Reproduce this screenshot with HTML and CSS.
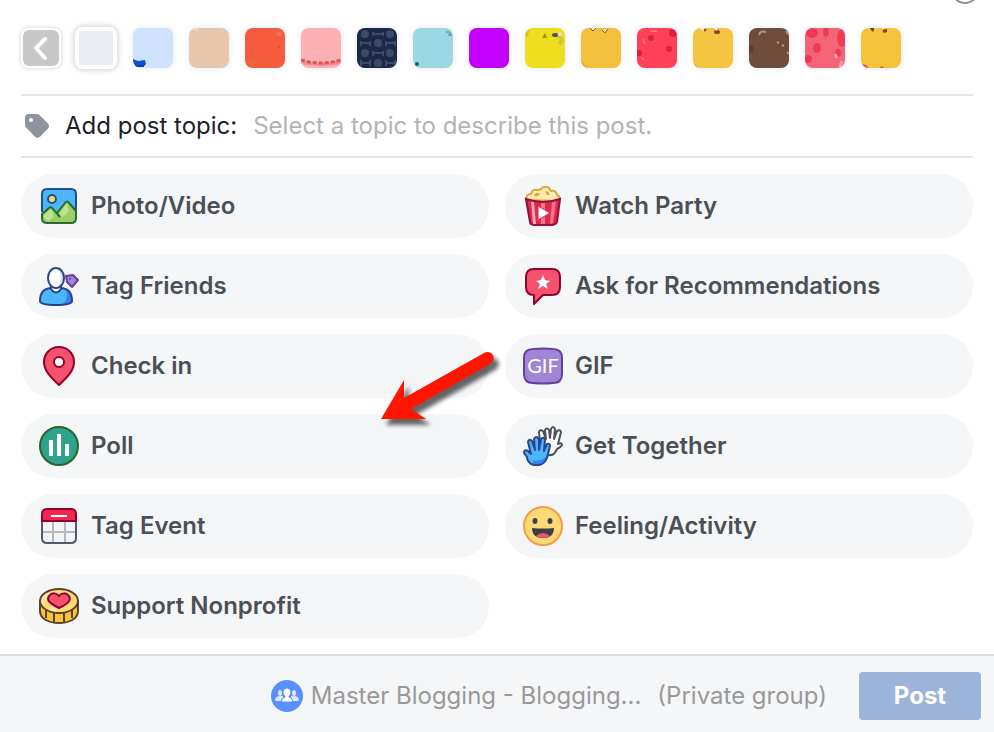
FILE: index.html
```html
<!DOCTYPE html>
<html lang="en">
<head>
    <meta charset="UTF-8">
    <meta name="viewport" content="width=device-width, initial-scale=1.0">
    <title>Create Post</title>
    <link rel="stylesheet" href="styles.css">
</head>
<body>

    <form class="composer">
        <button type="button" class="emoji-btn" aria-label="Insert an emoji"></button>

        <!-- Background picker -->
        <div class="backgrounds">
            <button type="button" class="swatch-back" aria-label="Hide backgrounds">
                <svg viewBox="0 0 36 36"><path d="M22 9 L13 18 L22 28" fill="none" stroke="#fff" stroke-width="4" stroke-linecap="round" stroke-linejoin="round"/></svg>
            </button>
            <div class="swatches">
                <button type="button" class="swatch swatch-none" aria-label="No background"></button>
                <button type="button" class="swatch" aria-label="Light blue">
                    <svg viewBox="0 0 40 40"><rect width="40" height="40" fill="#cfe2fd"/><path d="M0 31 L5 33 L12 32 L13 36 L10 39 L0 38Z" fill="#0a50d8"/><path d="M2 37h9v2h-9z" fill="#0b3f9b"/></svg>
                </button>
                <button type="button" class="swatch" aria-label="Tan">
                    <svg viewBox="0 0 40 40"><rect width="40" height="40" fill="#e8c6ab"/><path d="M4 1 L9 0 L8 3Z" fill="#f7dfd0"/></svg>
                </button>
                <button type="button" class="swatch" aria-label="Orange">
                    <svg viewBox="0 0 40 40"><rect width="40" height="40" fill="#f45c3d"/><path d="M30 5 L37 3 L36 9 L32 7Z" fill="#f8715a"/><path d="M1 34 L7 30 L11 33 L8 39 L0 40Z" fill="#e9643f"/><circle cx="34" cy="19" r="1" fill="#c9502f"/><circle cx="7" cy="23" r="1" fill="#e5553a"/></svg>
                </button>
                <button type="button" class="swatch" aria-label="Pink">
                    <svg viewBox="0 0 40 40"><rect width="40" height="40" fill="#fdb0b4"/><path d="M10 24h18" stroke="#fcb5ab" stroke-width="3"/><path d="M0 32 Q20 38 40 32 V36 Q20 40 0 36Z" fill="#f0908c"/><path d="M0 32 Q20 38 40 32" fill="none" stroke="#d95358" stroke-width="3" stroke-dasharray="4 2"/></svg>
                </button>
                <button type="button" class="swatch" aria-label="Navy pattern">
                    <svg viewBox="0 0 40 40"><rect width="40" height="40" fill="#1c2848"/><g fill="#3d4a67"><circle cx="8" cy="6" r="4"/><circle cx="33" cy="6" r="4"/><circle cx="21" cy="15" r="4"/><circle cx="8" cy="25" r="4"/><circle cx="33" cy="25" r="4"/><circle cx="21" cy="35" r="4"/></g><g fill="none" stroke="#3d4a67" stroke-width="2"><path d="M16 4v4M17 6h8M26 4v4M4 13v5M5 15h8M13 13v5M29 13v5M30 15h8M38 13v5M16 23v5M17 25h8M26 23v5M4 32v6M5 35h8M13 32v6M29 32v6M30 35h8M38 32v6"/></g></svg>
                </button>
                <button type="button" class="swatch" aria-label="Aqua">
                    <svg viewBox="0 0 40 40"><rect width="40" height="40" fill="#9cd7e6"/><path d="M33 4h3M35 7h4M37 4v3" stroke="#4e7f9c" stroke-width="1"/><circle cx="4" cy="36" r="2" fill="#285c78"/></svg>
                </button>
                <button type="button" class="swatch" aria-label="Purple">
                    <svg viewBox="0 0 40 40"><rect width="40" height="40" fill="#c300ff"/></svg>
                </button>
                <button type="button" class="swatch" aria-label="Yellow green">
                    <svg viewBox="0 0 40 40"><rect width="40" height="40" fill="#eddf1e"/><path d="M17 10 L20 5 L22 10Z" fill="#99951d"/><path d="M27 6 L34 4 L39 12 L36 18 L33 15 L35 11Z" fill="#cfc83a"/><ellipse cx="30" cy="7" rx="3" ry="2" fill="#56516b"/><circle cx="35" cy="6" r="2" fill="#f3e9a5"/><path d="M0 6 L5 1 L2 9Z" fill="#c8c029"/></svg>
                </button>
                <button type="button" class="swatch" aria-label="Amber">
                    <svg viewBox="0 0 40 40"><rect width="40" height="40" fill="#f3c03c"/><path d="M9 0 L12 3 L15 0M21 2 L24 5 L27 1" fill="#fff0b8" stroke="#8c5720" stroke-width="1"/><path d="M0 32 L7 40 H0Z" fill="#e1ad35"/></svg>
                </button>
                <button type="button" class="swatch" aria-label="Red">
                    <svg viewBox="0 0 40 40"><rect width="40" height="40" fill="#ff4058"/><g fill="#d9213f"><circle cx="14" cy="10" r="3"/><circle cx="36" cy="5" r="4"/><circle cx="32" cy="21" r="3"/><circle cx="2" cy="25" r="3"/></g><path d="M13 3h7M6 11l2 5M4 29l3 3" stroke="#f8706f" stroke-width="2"/></svg>
                </button>
                <button type="button" class="swatch" aria-label="Gold">
                    <svg viewBox="0 0 40 40"><rect width="40" height="40" fill="#f3c440"/><path d="M7 0 L11 4 L14 0Z" fill="#fff1bb"/><path d="M11 3l2-2" stroke="#6d502e" stroke-width="2"/><ellipse cx="24" cy="4" rx="3" ry="2" fill="#715034"/><path d="M21 0h3v3z" fill="#fff"/><path d="M0 35 L6 40 H0Z" fill="#8b9b35"/></svg>
                </button>
                <button type="button" class="swatch" aria-label="Brown">
                    <svg viewBox="0 0 40 40"><rect width="40" height="40" fill="#704d3a"/><path d="M10 7 Q11 2 17 4M28 14l2 1M33 17l2 1M37 3l3 4M38 24l2 2" fill="none" stroke="#b09481" stroke-width="2"/><ellipse cx="2" cy="21" rx="3" ry="4" fill="#5c4231"/></svg>
                </button>
                <button type="button" class="swatch" aria-label="Coral">
                    <svg viewBox="0 0 40 40"><rect width="40" height="40" fill="#f46478"/><g fill="#f03a55"><ellipse cx="7" cy="5" rx="6" ry="5"/><ellipse cx="21" cy="4" rx="3" ry="5"/><ellipse cx="37" cy="10" rx="5" ry="9"/><ellipse cx="12" cy="20" rx="4" ry="5"/><ellipse cx="3" cy="31" rx="4" ry="4"/><ellipse cx="33" cy="25" rx="3" ry="4"/></g><path d="M30 26l2 4M37 33l-2 6" stroke="#fba0a9" stroke-width="3"/></svg>
                </button>
                <button type="button" class="swatch" aria-label="Golden yellow">
                    <svg viewBox="0 0 40 40"><rect width="40" height="40" fill="#f3c33b"/><path d="M9 0h5l-2 4-2-2zM21 2l5-1v3l-3 1z" fill="#8a3b1d"/><path d="M13 1h2M21 1h2" stroke="#fff0ce" stroke-width="1"/><path d="M1 36l4 1 3 3H2zM18 40l3-2 2 2z" fill="#e15a35"/></svg>
                </button>
            </div>
        </div>

        <!-- Post topic -->
        <div class="topic">
            <svg class="topic-icon" viewBox="0 0 24 24"><path fill="#8d949e" fill-rule="evenodd" d="M4 0 H12 Q13.500 0 14.500 1 L23 9.500 Q25 12 23 14.500 L15 22.800 Q12.500 25 10 22.800 L1 13.500 Q0 12.500 0 11 V4 Q0 0 4 0Z M6 4 A2 2 0 1 0 6 8 A2 2 0 1 0 6 4Z"/></svg>
            <label for="topic">Add post topic:</label>
            <input type="text" id="topic" placeholder="Select a topic to describe this post.">
        </div>

        <!-- Add to post -->
        <div class="actions">
            <button type="button" class="action">
                <svg class="action-icon" viewBox="0 0 40 40">
                    <rect x="3" y="3" width="34" height="34" rx="5" fill="#4db5fa"/>
                    <circle cx="13" cy="13" r="4" fill="#ffd36e" stroke="#1d5290" stroke-width="2"/>
                    <path d="M3 28 L10 22 Q12 20 14 22 L18 27 L26 17 Q28 14 30 17 L37 25 V32 Q37 37 32 37 H8 Q3 37 3 32Z" fill="#9bcf64"/>
                    <path d="M5 29 L12 23 L15 30 L10 35 Q4 34 5 29Z M20 28 L28 17 L30 25 L24 31Z" fill="#bfe095"/>
                    <path d="M3 26 V8 Q3 3 8 3 H32 Q37 3 37 8 V24" fill="none" stroke="#1d5290" stroke-width="2"/>
                    <path d="M21 31 L14 23 Q12 20 10 22 L3 28 V32 Q3 37 8 37 H32 Q37 37 37 32 V25 L30 17 Q28 14 26 17 L18 27" fill="none" stroke="#286b35" stroke-width="2"/>
                </svg>
                <span>Photo/Video</span>
            </button>
            <button type="button" class="action">
                <svg class="action-icon" viewBox="0 0 40 40">
                    <path d="M3 14 Q3 8 8 8 Q9 3 14 4 Q17 4 18 3 Q22 -1 26 2 Q27 4 28 5 Q33 4 34 9 Q38 11 36 15Z" fill="#ffeab0" stroke="#dfa63f" stroke-width="2"/>
                    <path d="M12 10 Q14 7 16 9M23 7 Q25 6 25 9" fill="none" stroke="#dfa63f" stroke-width="3"/>
                    <path d="M3 13 Q20 19 37 13 L34 36 Q33 39 28 39 H12 Q7 39 7 36Z" fill="#e0294d"/>
                    <path d="M8 15 L11 16 L13 38 H10Z" fill="#f9a9b8"/>
                    <path d="M18 17 H22 V39 H18Z" fill="#f3758a"/>
                    <path d="M29 16 L33 15 L30 37 L27 38Z" fill="#f3758a"/>
                    <path d="M3 13 Q20 19 37 13 L34 36 Q33 39 28 39 H12 Q7 39 7 36Z" fill="none" stroke="#94103a" stroke-width="2"/>
                    <path d="M15 20 L27 27 L15 34Z" fill="#fff" stroke="#e0294d"/>
                </svg>
                <span>Watch Party</span>
            </button>
            <button type="button" class="action">
                <svg class="action-icon" viewBox="0 0 40 40">
                    <path d="M1 35 Q1 22 13 22 H21 Q33 22 33 35 Q33 39 17 39 Q1 39 1 35Z" fill="#4db5fa"/>
                    <path d="M27 24 Q33 27 33 35 Q33 38 24 38 Q30 33 27 24Z" fill="#3482fa"/>
                    <path d="M1 35 Q1 22 13 22 H21 Q33 22 33 35 Q33 39 17 39 Q1 39 1 35Z" fill="none" stroke="#27468c" stroke-width="2"/>
                    <path d="M12 20 V23 Q17 30 22 23 V20Z" fill="#fff" stroke="#27468c" stroke-width="2"/>
                    <ellipse cx="17" cy="12" rx="8" ry="10" fill="#fff"/>
                    <path d="M20 3 Q25 7 25 13 Q24 20 18 22 Q24 14 20 3Z" fill="#dfe2e8"/>
                    <ellipse cx="17" cy="12" rx="8" ry="10" fill="none" stroke="#27468c" stroke-width="2"/>
                    <path d="M27 10 L34 9 L39 14 L33 21 L28 16Z" fill="#a085d5" stroke="#6040a0" stroke-width="2" stroke-linejoin="round"/>
                    <circle cx="31" cy="13" r="1" fill="#6040a0"/>
                </svg>
                <span>Tag Friends</span>
            </button>
            <button type="button" class="action">
                <svg class="action-icon" viewBox="0 0 40 40">
                    <path d="M11 3 H29 Q37 3 37 11 V21 Q37 29 29 29 H20 L11 38 V29 Q3 29 3 21 V11 Q3 3 11 3Z" fill="#f5536d" stroke="#92002f" stroke-width="2" stroke-linejoin="round"/>
                    <path d="M20 9 L22 14 L27 15 L23 18 L25 23 L20 20 L15 23 L17 18 L13 15 L18 14Z" fill="#fff"/>
                </svg>
                <span>Ask for Recommendations</span>
            </button>
            <button type="button" class="action">
                <svg class="action-icon" viewBox="0 0 40 40">
                    <path d="M20 1 C11 1 5 8 5 16 C5 26 14 33 20 39 C26 33 35 26 35 16 C35 8 29 1 20 1Z" fill="#f5536d" stroke="#92002f" stroke-width="2" stroke-linejoin="round"/>
                    <circle cx="20" cy="16" r="5" fill="#fff" stroke="#92002f" stroke-width="2"/>
                </svg>
                <span>Check in</span>
            </button>
            <button type="button" class="action">
                <svg class="action-icon" viewBox="0 0 40 40">
                    <path d="M10 3 Q20 2 30 3 Q39 3 39 12 V28 Q39 37 30 37 Q20 38 10 37 Q1 37 1 28 V12 Q1 3 10 3Z" fill="#a085d5" stroke="#6040a0" stroke-width="2"/>
                    <text class="gif-text" x="20" y="27" text-anchor="middle">GIF</text>
                </svg>
                <span>GIF</span>
            </button>
            <button type="button" class="action">
                <svg class="action-icon" viewBox="0 0 40 40">
                    <circle cx="20" cy="20" r="19" fill="#31a38c" stroke="#27652f" stroke-width="2"/>
                    <path d="M10 14h4v16h-4zM18 8h4v22h-4zM26 18h4v12h-4z" fill="#fff"/>
                </svg>
                <span>Poll</span>
            </button>
            <button type="button" class="action">
                <svg class="action-icon" viewBox="0 0 40 40">
                    <path d="M17 16 L16 6 Q17 3 20 5 L23 13 L22 4 Q24 1 26 4 L27 12 L28 3 Q30 -1 32 3 L31 13 L34 5 Q37 3 38 6 L35 18 Q39 16 39 19 Q38 21 34 23 Q31 30 26 29 L18 24Z" fill="#fff" stroke="#4b515b" stroke-width="2" stroke-linejoin="round"/>
                    <path d="M8 38 Q4 35 4 31 L1 27 Q1 23 5 25 L8 28 L5 16 Q6 12 9 15 L12 24 L11 13 Q13 9 16 13 L16 24 L18 13 Q21 10 22 14 L21 25 L24 18 Q27 17 27 20 L24 32 Q20 42 8 38Z" fill="#4db5fa"/>
                    <path d="M24 30 Q20 35 9 35 Q12 39 18 38 Q22 36 24 30Z" fill="#3482fa"/>
                    <path d="M8 38 Q4 35 4 31 L1 27 Q1 23 5 25 L8 28 L5 16 Q6 12 9 15 L12 24 L11 13 Q13 9 16 13 L16 24 L18 13 Q21 10 22 14 L21 25 L24 18 Q27 17 27 20 L24 32 Q20 42 8 38Z" fill="none" stroke="#27468c" stroke-width="2" stroke-linejoin="round"/>
                </svg>
                <span>Get Together</span>
            </button>
            <button type="button" class="action">
                <svg class="action-icon" viewBox="0 0 40 40">
                    <rect x="3" y="3" width="34" height="34" rx="5" fill="#f4f4f6"/>
                    <path d="M14 16v21M26 16v21M3 26h34" stroke="#b5b7bd" stroke-width="2"/>
                    <path d="M3 16 V32 Q3 37 8 37 H32 Q37 37 37 32 V16" fill="none" stroke="#4f5b6b" stroke-width="2"/>
                    <path d="M3 15 V8 Q3 3 8 3 H32 Q37 3 37 8 V15Z" fill="#f0284f" stroke="#92002f" stroke-width="2"/>
                    <path d="M12 10h16" stroke="#fff" stroke-width="2"/>
                </svg>
                <span>Tag Event</span>
            </button>
            <button type="button" class="action">
                <svg class="action-icon" viewBox="0 0 40 40">
                    <circle cx="20" cy="20" r="19" fill="#fed975" stroke="#f69a48" stroke-width="2"/>
                    <ellipse cx="12" cy="15" rx="2.500" ry="3" fill="#3b4250"/>
                    <ellipse cx="27" cy="15" rx="2.500" ry="3" fill="#3b4250"/>
                    <path d="M9 22 Q20 23 31 22 Q31 32 20 32 Q9 32 9 22Z" fill="#3b3f4a"/>
                    <path d="M13 30 Q20 24 27 30 Q20 34 13 30Z" fill="#f5536d"/>
                </svg>
                <span>Feeling/Activity</span>
            </button>
            <button type="button" class="action">
                <svg class="action-icon" viewBox="0 0 40 40">
                    <path d="M1 15 V25 C1 33 10 37 20 37 C30 37 39 33 39 25 V15Z" fill="#f7c434" stroke="#5c4030" stroke-width="2"/>
                    <path d="M7 24v8M15 27v9M25 27v9M33 24v8" stroke="#5c4030" stroke-width="2"/>
                    <ellipse cx="20" cy="15" rx="19" ry="12" fill="#ffd975"/>
                    <path d="M3 19 Q8 14 12 4 Q3 7 2 15Z M9 25 L29 4 L33 6 L15 27Z" fill="#ffe7a6"/>
                    <ellipse cx="20" cy="15" rx="19" ry="12" fill="none" stroke="#5c4030" stroke-width="2"/>
                    <path d="M20 22 C8 16 8 13 10 10 C13 6 18 7 20 10 C22 7 27 6 30 10 C32 13 31 17 20 22Z" fill="#f5536d" stroke="#92002f" stroke-width="2"/>
                </svg>
                <span>Support Nonprofit</span>
            </button>

            <svg class="pointer" viewBox="0 0 128 84" aria-hidden="true">
                <path d="M0 70 L23 31 V49 L103 4 C111 0 117 10 109 15 L30 60 L45 70Z" fill="#ff1500"/>
            </svg>
        </div>

        <!-- Footer -->
        <div class="footer">
            <svg class="group-icon" viewBox="0 0 32 32">
                <circle cx="16" cy="16" r="16" fill="#5890ff"/>
                <g fill="#dce7ff"><ellipse cx="9" cy="13" rx="2" ry="3"/><ellipse cx="23" cy="13" rx="2" ry="3"/><path d="M4 20 Q4 17 8 16 H12 V21 H5ZM28 20 Q28 17 24 16 H20 V21 H27Z"/></g>
                <path d="M16 8 Q20 8 20 12 Q20 15 18 16 V17 Q22 18 22 22 H10 Q10 18 14 17 V16 Q12 15 12 12 Q12 8 16 8Z" fill="#fff" stroke="#5890ff"/>
            </svg>
            <span class="group-name">Master Blogging - Blogging...</span>
            <span class="group-privacy">(Private group)</span>
            <button type="submit" class="post-btn" disabled>Post</button>
        </div>
    </form>

</body>
</html>
```

FILE: styles.css
```css
* {
    box-sizing: border-box;
}

body {
    margin: 0;
    font-family: Inter, "Liberation Sans", sans-serif;
    font-size: 24px;
    line-height: 32px;
    color: #1d2129;
    background-color: #fff;
}

button, input {
    font: inherit;
}

button {
    border: none;
    padding: 0;
    cursor: pointer;
}

svg {
    display: block;
    flex-shrink: 0;
}

.composer {
    position: relative;
    display: flex;
    flex-direction: column;
    min-height: 100vh;
    overflow: hidden;
}

/* Sits over the top edge, mostly scrolled away */
.emoji-btn {
    position: absolute;
    top: -24px;
    right: 15px;
    width: 28px;
    height: 28px;
    border: 2px solid #8d949e;
    border-radius: 50%;
    background: none;
}

.backgrounds {
    display: flex;
    align-items: center;
    gap: 14px;
    padding: 27px 21px 25px;
}

.swatches {
    display: flex;
    align-items: center;
    gap: 16px;
}

.swatch, .swatch-back {
    width: 40px;
    height: 40px;
    flex-shrink: 0;
    border-radius: 8px;
    overflow: hidden;
    box-shadow: 0 0 4px 2px #f0f1f4;
}

.swatch-back {
    border: 2px solid #fff;
    background-color: #c6c8ca;
    box-shadow: 0 0 3px 2px #e9eaed;
}

.swatch-none {
    width: 42px;
    height: 42px;
    border: 4px solid #fff;
    background-color: #e9ecf1;
    box-shadow: 0 0 5px 2px #dcdde1;
}

.topic {
    display: flex;
    align-items: center;
    height: 64px;
    margin: 0 21px;
    padding-left: 4px;
    border-top: 2px solid #e5e6e8;
    border-bottom: 2px solid #e5e6e8;
}

.topic-icon {
    width: 24px;
    height: 24px;
    margin-right: 16px;
}

.topic label {
    white-space: nowrap;
}

.topic input {
    flex: 1;
    min-width: 0;
    margin-left: 16px;
    padding: 0;
    border: none;
    outline: none;
    background: none;
}

.topic input::placeholder {
    color: #b3b3b3;
    opacity: 1;
}

.actions {
    position: relative;
    display: grid;
    grid-template-columns: 1fr 1fr;
    gap: 16px;
    padding: 16px 21px;
}

.action {
    display: flex;
    align-items: center;
    gap: 12px;
    height: 64px;
    padding: 0 18px;
    border-radius: 32px;
    background-color: #f5f6f8;
    color: #4b4f56;
    font-weight: 600;
    text-align: left;
}

.action-icon {
    width: 40px;
    height: 40px;
}

.gif-text {
    font-family: Lato, sans-serif;
    font-size: 20px;
    font-weight: 400;
    fill: #fff;
}

.pointer {
    position: absolute;
    top: 191px;
    left: calc(50% - 116px);
    width: 128px;
    height: 84px;
    overflow: visible;
    filter: drop-shadow(5px 6px 2px rgba(0, 0, 0, 0.6));
    pointer-events: none;
}

.footer {
    display: flex;
    flex: 1;
    align-items: center;
    justify-content: flex-end;
    padding: 16px 13px 12px;
    border-top: 2px solid #dcdde3;
    background-color: #f5f6f8;
    color: #999;
}

.group-icon {
    width: 32px;
    height: 32px;
    margin-right: 8px;
}

.group-name {
    margin-right: 16px;
}

.group-privacy {
    margin-right: 32px;
}

.post-btn {
    width: 122px;
    height: 48px;
    border-radius: 4px;
    background-color: #9cb4d8;
    color: #fff;
    font-weight: 700;
}
```
